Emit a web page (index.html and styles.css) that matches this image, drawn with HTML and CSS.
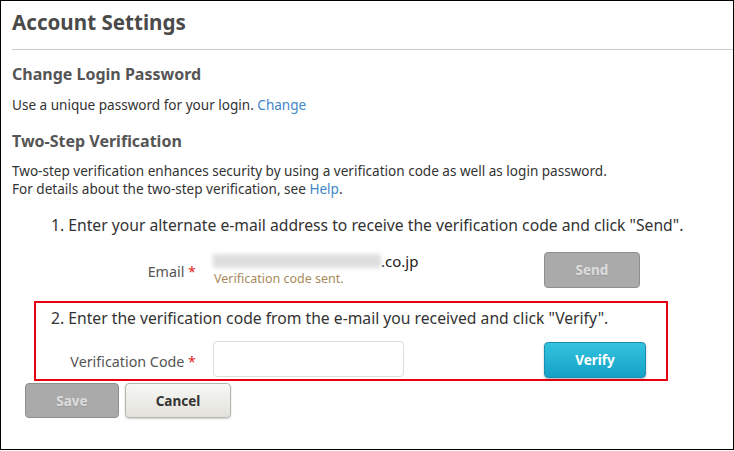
FILE: index.html
```html
<!DOCTYPE html>
<html>
<head>
<meta charset="utf-8">
<link rel="stylesheet" href="styles.css">
</head>
<body>
<div class="frame">
  <div class="header"><h1 class="title">Account Settings</h1></div>
  <h2 class="sec sec-first">Change Login Password</h2>
  <p class="text t1">Use a unique password for your login. <a class="link">Change</a></p>
  <h2 class="sec sec-second">Two-Step Verification</h2>
  <p class="text t2">Two-step verification enhances security by using a verification code as well as login password.<br>For details about the two-step verification, see <a class="link">Help</a>.</p>
  <div class="step step1">1. Enter your alternate e-mail address to receive the verification code and click "Send".</div>
  <div class="row row-email">
    <div class="label label-email">Email <span class="req">*</span></div>
    <div class="value">
      <div class="email"><span class="blur"></span><span class="dom">.co.jp</span></div>
      <div class="note">Verification code sent.</div>
    </div>
    <button class="btn btn-gray btn-send">Send</button>
  </div>
  <div class="box">
    <div class="step">2. Enter the verification code from the e-mail you received and click "Verify".</div>
    <div class="row row-code">
      <div class="label label-code">Verification Code <span class="req">*</span></div>
      <div class="value"><div class="input"></div></div>
      <button class="btn btn-blue btn-verify">Verify</button>
    </div>
  </div>
  <div class="actions">
    <button class="btn btn-gray btn-save">Save</button>
    <button class="btn btn-light btn-cancel">Cancel</button>
  </div>
</div>
</body>
</html>
```
FILE: styles.css
```css
* { box-sizing: border-box; }
html, body { margin: 0; padding: 0; background: #fff; }
body { font-family: "Noto Sans", "Open Sans", sans-serif; color: #333; }
.frame {
  width: 734px; height: 450px;
  border: 1px solid #000;
  padding-left: 11px;
}
.header { border-bottom: 1px solid #ccc; height: 49px; }
.title {
  margin: 0; font-size: 20.6px; font-weight: bold; color: #4a4a4a;
  line-height: 42px;
}
.sec { margin: 14px 0 0; font-size: 16px; line-height: 20px; font-weight: bold; color: #555; }
.sec-second { margin-top: 17px; }
.text { margin: 12px 0 0; font-size: 13.55px; line-height: 18px; color: #333; white-space: nowrap; }
.t2 { margin-top: 11px; }
.link { color: #3f87c8; }
.step { font-size: 15.7px; line-height: 20px; color: #333; padding-left: 39px; white-space: nowrap; }
.step1 { margin-top: 17px; }
.row { display: flex; align-items: flex-start; height: 36px; }
.row-email { margin-top: 17px; }
.label { font-size: 14.3px; color: #555; text-align: right; padding-right: 17px; white-space: nowrap; }
.label-email { width: 201px; line-height: 40px; }
.req { color: #e31b1b; }
.value { width: 331px; }
.email { display: flex; align-items: center; height: 18px; font-size: 15px; color: #222; }
.blur { display: inline-block; width: 168px; height: 14px; background: #dedede; filter: blur(2px); border-radius: 2px; }
.dom { line-height: 18px; }
.note { font-size: 12.5px; line-height: 18px; color: #a88a5c; padding-left: 1px; }
.btn {
  font-family: "Noto Sans", "Open Sans", sans-serif;
  font-size: 13.5px; font-weight: bold; border-radius: 4px; padding: 0;
  height: 36px;
}
.btn-gray { background: #aaa; border: 1px solid #8f8f8f; color: #ddd; text-shadow: 0 1px 0 #999; }
.btn-send { width: 96px; }
.btn-blue {
  background: linear-gradient(#33c3de, #15a2c7); border: 1px solid #1a8eb0; color: #fff;
  box-shadow: 0 1px 2px rgba(0,0,0,0.3);
}
.btn-verify { width: 102px; margin-top: 1px; }
.btn-light {
  background: linear-gradient(#f7f7f4, #e3e2dc); border: 1px solid #b5b5b0; color: #333;
  box-shadow: 0 1px 2px rgba(0,0,0,0.2);
}
.box {
  margin: 13px 0 0 22px; width: 634px; height: 80px;
  border: 2px solid #e60012; padding-top: 5px;
}
.box .step { padding-left: 15px; }
.row-code { margin-top: 13px; }
.label-code { width: 177px; line-height: 42px; }
.input { width: 191px; height: 36px; border: 1px solid #dcdcdc; border-radius: 4px; background: #fff; }
.actions { margin: 2px 0 0 13px; display: flex; gap: 6px; }
.btn-save { width: 94px; height: 35px; }
.btn-cancel { width: 106px; height: 35px; }
```
